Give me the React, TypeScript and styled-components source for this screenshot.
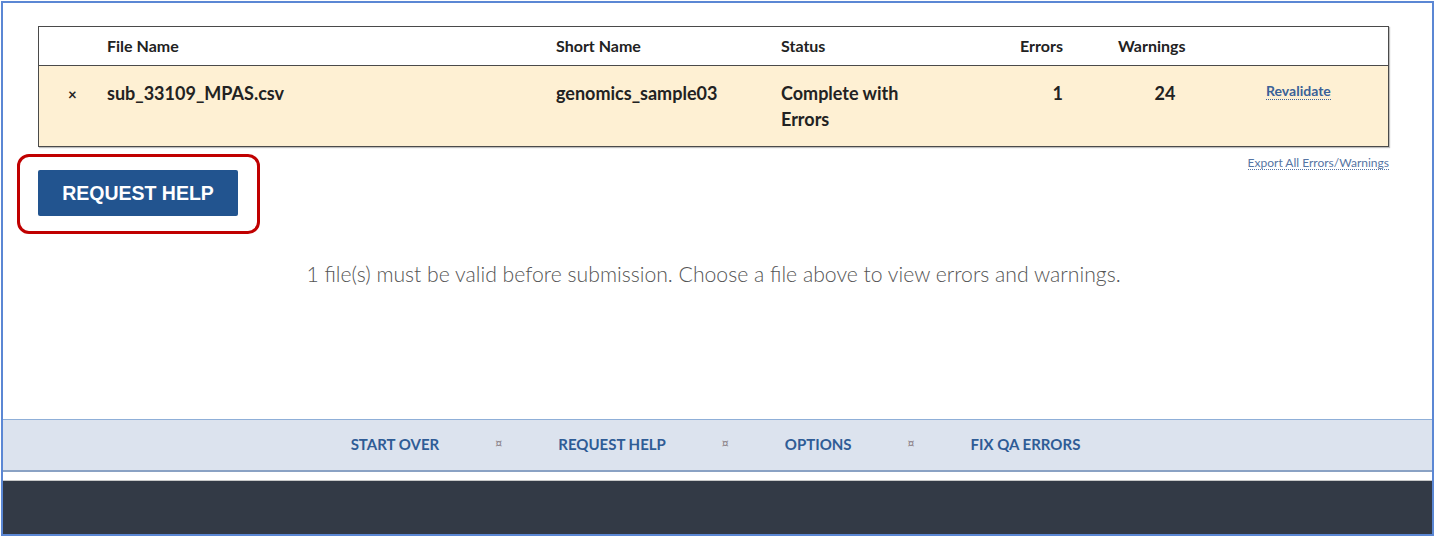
import * as React from 'react'
import styled, { createGlobalStyle } from 'styled-components'

const GlobalStyle = createGlobalStyle`
  html, body {
    margin: 0;
    padding: 0;
    background: #fff;
  }
  body {
    font-family: Lato, 'Open Sans', Arial, sans-serif;
    color: #222;
  }
`

const Frame = styled.div`
  box-sizing: border-box;
  width: 1433px;
  height: 535px;
  margin: 1px 0 0 1px;
  border: 2px solid #5b87d4;
  display: flex;
  flex-direction: column;
`

const Main = styled.main`
  flex: 1;
  padding: 23px 43px 0 35px;
`

const Table = styled.div`
  border: 1px solid #4a4a4a;
  box-shadow: 1px 1px 1px rgba(0, 0, 0, 0.25);
`

const Row = styled.div<{ $head?: boolean }>`
  display: grid;
  grid-template-columns: 68px 449px 225px 159px 135px 180px 1fr;
  align-items: ${p => (p.$head ? 'center' : 'start')};
  height: ${p => (p.$head ? '38px' : '80px')};
  background: ${p => (p.$head ? '#fff' : '#fef0d3')};
  border-bottom: ${p => (p.$head ? '1px solid #4a4a4a' : 'none')};
`

const Cell = styled.div<{
  $align?: 'left' | 'right' | 'center'
  $pl?: number
  $pr?: number
  $head?: boolean
}>`
  text-align: ${p => p.$align || 'left'};
  padding-left: ${p => p.$pl || 0}px;
  padding-right: ${p => p.$pr || 0}px;
  padding-top: ${p => (p.$head ? 0 : 14)}px;
  font-size: ${p => (p.$head ? 16 : 18)}px;
  font-weight: 700;
  line-height: ${p => (p.$head ? '20px' : '26px')};
  color: #222;
`

const Remove = styled.span`
  font-size: 15px;
  font-weight: 700;
`

const SmallLink = styled.a<{ $bold?: boolean }>`
  display: inline-block;
  font-size: ${p => (p.$bold ? 14 : 12)}px;
  font-weight: ${p => (p.$bold ? 700 : 400)};
  line-height: ${p => (p.$bold ? 16 : 13)}px;
  color: ${p => (p.$bold ? '#3a6198' : '#5675a4')};
  text-decoration: none;
  border-bottom: 1px dotted ${p => (p.$bold ? '#3a6198' : '#5675a4')};
  cursor: pointer;
`

const RevalidateWrap = styled.div`
  padding: 14px 0 0 11px;
`

const ActionRow = styled.div`
  display: flex;
  justify-content: space-between;
  align-items: flex-start;
`

const Highlight = styled.div`
  margin: 7px 0 0 -21px;
  padding: 13px 19px 15px 18px;
  border: 3px solid #c00000;
  border-radius: 12px;
`

const HelpButton = styled.button`
  width: 200px;
  height: 46px;
  border: none;
  border-radius: 2px;
  background: #22548f;
  color: #fff;
  font-family: 'Liberation Sans', Arial, sans-serif;
  font-size: 19.5px;
  font-weight: 700;
  cursor: pointer;
`

const ExportWrap = styled.div`
  margin-top: 4px;
`

const Message = styled.p`
  margin: 26px 0 0;
  text-align: center;
  font-size: 21.2px;
  font-weight: 300;
  line-height: 28px;
  color: #555;
`

const Nav = styled.nav`
  box-sizing: border-box;
  height: 53px;
  padding: 0 4px 3px 0;
  border-top: 1px solid #8fafd8;
  border-bottom: 2px solid #8aa2c4;
  background: #dce3ee;
  display: flex;
  justify-content: center;
  align-items: center;
  gap: 56px;
`

const NavLink = styled.a`
  font-size: 15px;
  font-weight: 700;
  color: #2f5c96;
  text-decoration: none;
  cursor: pointer;
`

const Sep = styled.span`
  font-family: 'DejaVu Sans', sans-serif;
  font-size: 11px;
  color: #8a7f86;
`

const Spacer = styled.div`
  height: 8px;
  border-bottom: 1px solid #c8c8c8;
`

const Footer = styled.footer`
  height: 53px;
  background: #333a46;
`

const navItems = ['START OVER', 'REQUEST HELP', 'OPTIONS', 'FIX QA ERRORS']

export default function App() {
  return (
    <>
      <GlobalStyle />
      <Frame>
        <Main>
          <Table>
            <Row $head>
              <Cell $head />
              <Cell $head>File Name</Cell>
              <Cell $head>Short Name</Cell>
              <Cell $head>Status</Cell>
              <Cell $head $align="right" $pr={12}>
                Errors
              </Cell>
              <Cell $head $pl={43}>
                Warnings
              </Cell>
              <Cell $head />
            </Row>
            <Row>
              <Cell $pl={29}>
                <Remove>×</Remove>
              </Cell>
              <Cell>sub_33109_MPAS.csv</Cell>
              <Cell>genomics_sample03</Cell>
              <Cell $pr={20}>Complete with Errors</Cell>
              <Cell $align="right" $pr={12}>
                1
              </Cell>
              <Cell $align="center">24</Cell>
              <RevalidateWrap>
                <SmallLink $bold>Revalidate</SmallLink>
              </RevalidateWrap>
            </Row>
          </Table>
          <ActionRow>
            <Highlight>
              <HelpButton>REQUEST HELP</HelpButton>
            </Highlight>
            <ExportWrap>
              <SmallLink>Export All Errors/Warnings</SmallLink>
            </ExportWrap>
          </ActionRow>
          <Message>
            1 file(s) must be valid before submission. Choose a file above to
            view errors and warnings.
          </Message>
        </Main>
        <Nav>
          {navItems.map((item, i) => (
            <React.Fragment key={item}>
              {i > 0 && <Sep>¤</Sep>}
              <NavLink>{item}</NavLink>
            </React.Fragment>
          ))}
        </Nav>
        <Spacer />
        <Footer />
      </Frame>
    </>
  )
}
